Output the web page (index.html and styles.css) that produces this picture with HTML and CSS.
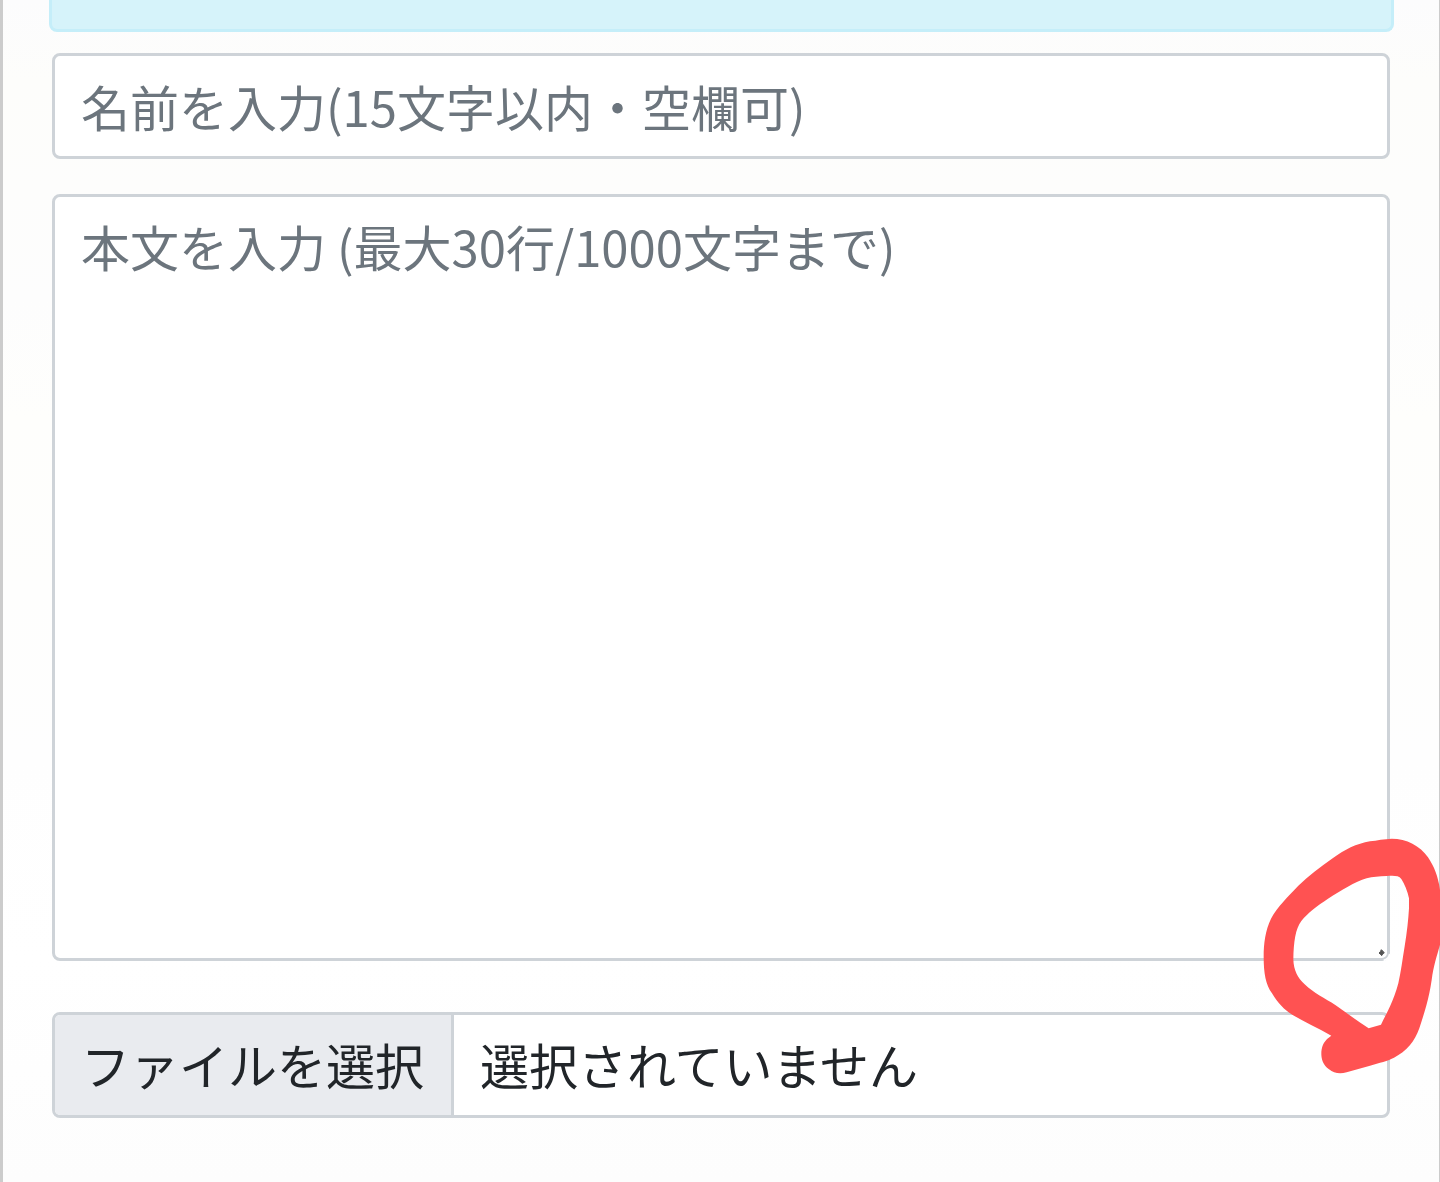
FILE: index.html
```html
<!DOCTYPE html>
<html lang="ja">
<head>
<meta charset="utf-8">
<meta name="viewport" content="width=device-width, initial-scale=1">
<title>投稿フォーム</title>
<link rel="stylesheet" href="styles.css">
</head>
<body>
<main class="page">
  <div class="notice"></div>
  <form class="post-form">
    <input class="field name-field" type="text" maxlength="15" aria-label="名前" placeholder="名前を入力(15文字以内・空欄可)">
    <div class="message">
      <textarea class="field message-field" aria-label="本文" maxlength="1000" placeholder="本文を入力 (最大30行/1000文字まで)"></textarea>
      <svg class="marker" viewBox="0 0 600 810" aria-hidden="true">
        <path d="M431 421Q446 417 449 402" fill="none" stroke="#fff" stroke-width="5"/>
        <path d="M424 389l4 4 5 5-5 4-3 5-4-4-4-4 4-4z" fill="#555" stroke="#555" stroke-width="3"/>
        <path fill="#ff5252" fill-rule="evenodd" d="M455 56C500 56 540 77 564 112C582 139 594 168 600 210V374C591 407 580 438 575 480C567 535 553 580 538 625C524 665 500 694 462 713C445 722 417 729 390 737L320 757C298 763 281 759 267 748C250 736 243 718 244 696C246 674 254 660 274 647C232 623 193 606 158 585C133 570 113 549 96 520C77 493 71 460 71 410C71 370 76 331 93 296C111 262 145 228 175 197C205 168 242 140 278 115C313 89 350 71 390 64C411 61 433 57 455 56ZM440 168C417 169 398 170 380 175C344 186 304 211 264 236C232 257 203 279 184 303C166 327 161 366 160 418C161 451 173 474 194 493C222 520 254 534 287 556C320 578 350 603 386 625L423 614C441 578 462 540 475 490C483 456 487 420 494 379C501 336 505 300 507 265V235C503 213 493 192 484 177C476 166 460 167 440 168Z"/>
      </svg>
    </div>
    <label class="file-picker">
      <input class="file-input" type="file">
      <span class="file-button">ファイルを選択</span>
      <span class="file-status">選択されていません</span>
    </label>
  </form>
</main>
</body>
</html>
```
FILE: styles.css
```css
* {
  box-sizing: border-box;
}

body {
  margin: 0;
  overflow-x: hidden;
  font-family: "Noto Sans CJK JP", sans-serif;
  font-size: 49px;
  line-height: 64px;
  color: #212529;
}

.page {
  display: flex;
  flex-direction: column;
  gap: 21px;
  min-height: 100vh;
  padding: 0 45px 64px 46px;
  border-left: 3px solid #ccc;
  border-right: 1px solid #ccc;
  background: linear-gradient(#fcfcfd 0, #fdfdfb 80px, #fdfdfd 300px, #fefefc 420px, #fefefe 760px, #fff 960px, #fdfdfd 100%);
}

.notice {
  height: 32px;
  border: 3px solid #c5eef9;
  border-top: 0;
  border-radius: 0 0 8px 8px;
  background: #d6f3fa;
}

.post-form {
  display: flex;
  flex-direction: column;
  padding: 0 4px 0 3px;
}

.field {
  display: block;
  width: 100%;
  margin: 0;
  padding: 17px 26px 19px;
  border: 3px solid #ced3d8;
  border-radius: 8px;
  background: #fff;
  color: inherit;
  font: inherit;
}

.field::placeholder {
  color: #6c757d;
  opacity: 1;
}

.name-field {
  height: 106px;
}

.message {
  position: relative;
  margin: 35px 0 51px;
}

.message-field {
  height: 767px;
  resize: none;
}

.marker {
  position: absolute;
  right: -50px;
  bottom: -129px;
  z-index: 1;
  width: 200px;
  height: 270px;
  pointer-events: none;
}

.file-picker {
  position: relative;
  display: flex;
  overflow: hidden;
  border: 3px solid #ced3d8;
  border-radius: 8px;
  background: #fff;
}

.file-input {
  position: absolute;
  inset: 0;
  width: 100%;
  opacity: 0;
}

.file-button,
.file-status {
  padding: 17px 26px 19px;
  white-space: nowrap;
}

.file-button {
  padding-right: 27px;
  border-right: 3px solid #ced3d8;
  background: #e9ebef;
}
```
